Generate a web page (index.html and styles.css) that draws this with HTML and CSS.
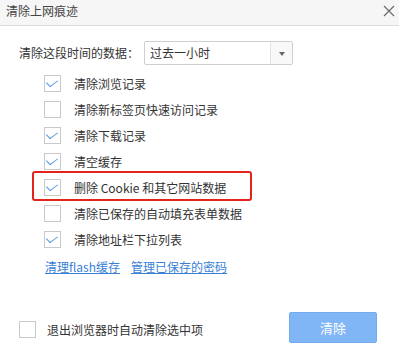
FILE: index.html
```html
<!DOCTYPE html>
<html lang="zh-CN">
<head>
    <meta charset="UTF-8">
    <title>清除上网痕迹</title>
    <link rel="stylesheet" href="styles.css">
</head>
<body>
    <div class="dialog">
        <div class="titlebar">
            <span class="title">清除上网痕迹</span>
            <svg class="close" width="12" height="12" viewBox="0 0 12 12">
                <path d="M1 1 L11 11 M11 1 L1 11" stroke="#6b6b6b" stroke-width="1.2" fill="none"/>
            </svg>
        </div>

        <div class="content">
            <div class="range">
                <span class="range-label">清除这段时间的数据：</span>
                <div class="select">
                    <span class="select-value">过去一小时</span>
                    <span class="select-arrow"></span>
                </div>
            </div>

            <ul class="items">
                <li class="item"><span class="box checked"></span>清除浏览记录</li>
                <li class="item"><span class="box"></span>清除新标签页快速访问记录</li>
                <li class="item"><span class="box checked"></span>清除下载记录</li>
                <li class="item"><span class="box checked"></span>清空缓存</li>
                <li class="item marked"><span class="box checked"></span>删除 Cookie 和其它网站数据</li>
                <li class="item"><span class="box"></span>清除已保存的自动填充表单数据</li>
                <li class="item"><span class="box checked"></span>清除地址栏下拉列表</li>
            </ul>

            <div class="links">
                <a href="#">清理flash缓存</a>
                <a href="#">管理已保存的密码</a>
            </div>
        </div>

        <div class="footer">
            <label class="auto"><span class="box"></span>退出浏览器时自动清除选中项</label>
            <button class="clear-btn">清除</button>
        </div>
    </div>
</body>
</html>
```

FILE: styles.css
```css
body {
    margin: 0;
    background: #fff;
    font-family: "Noto Sans CJK SC", "Noto Sans", sans-serif;
    font-size: 12px;
    color: #333;
}

.dialog {
    width: 399px;
    height: 350px;
    display: flex;
    flex-direction: column;
}

.titlebar {
    height: 22px;
    border-bottom: 1px solid #dcdcdc;
    background: #f6f6f6;
    display: flex;
    align-items: center;
    justify-content: space-between;
    padding: 0 4px 3px 6px;
}

.title {
    font-size: 12px;
    color: #444;
    line-height: 22px;
}

.content {
    padding-left: 19px;
}

.range {
    display: flex;
    align-items: center;
    margin-top: 15px;
}

.range-label {
    width: 125px;
    line-height: 24px;
}

.select {
    width: 147px;
    height: 22px;
    border: 1px solid #cfcfcf;
    border-radius: 2px;
    display: flex;
}

.select-value {
    flex: 1;
    padding-left: 5px;
    line-height: 22px;
}

.select-arrow {
    width: 21px;
    border-left: 1px solid #e2e2e2;
    background: #f8f8f8;
    position: relative;
}

.select-arrow::after {
    content: "";
    position: absolute;
    left: 8px;
    top: 10px;
    border-left: 3px solid transparent;
    border-right: 3px solid transparent;
    border-top: 4px solid #666;
}

.items {
    list-style: none;
    margin: 5px 0 0 25px;
    padding: 0;
}

.item {
    height: 26px;
    display: flex;
    align-items: center;
    position: relative;
}

.marked::after {
    content: "";
    position: absolute;
    left: -12px;
    top: -3px;
    width: 216px;
    height: 26px;
    border: 2px solid #e5231d;
    border-radius: 3px;
}

.box {
    width: 15px;
    height: 15px;
    border: 1px solid #c9c9c9;
    background: #fff;
    margin-right: 13px;
    flex-shrink: 0;
    position: relative;
}

.box.checked::after {
    content: "";
    position: absolute;
    left: 4px;
    top: 1px;
    width: 5px;
    height: 9px;
    border-right: 1px solid #5b9be0;
    border-bottom: 1px solid #5b9be0;
    transform: rotate(45deg) skewX(-8deg);
}

.links {
    margin-top: 7px;
    height: 16px;
    display: flex;
    gap: 11px;
    padding-left: 26px;
    line-height: 16px;
}

.links a {
    color: #3a7fd5;
    text-decoration: underline;
}

.footer {
    margin-top: 37px;
    padding: 0 22px 0 19px;
    display: flex;
    align-items: center;
    justify-content: space-between;
}

.auto {
    display: flex;
    align-items: center;
    margin-top: 3px;
}

.auto .box {
    margin-right: 11px;
}

.clear-btn {
    width: 88px;
    height: 31px;
    background: #80b5f6;
    border: 1px solid #74aaf0;
    border-radius: 2px;
    color: #fff;
    font-family: inherit;
    font-size: 13px;
}
```
